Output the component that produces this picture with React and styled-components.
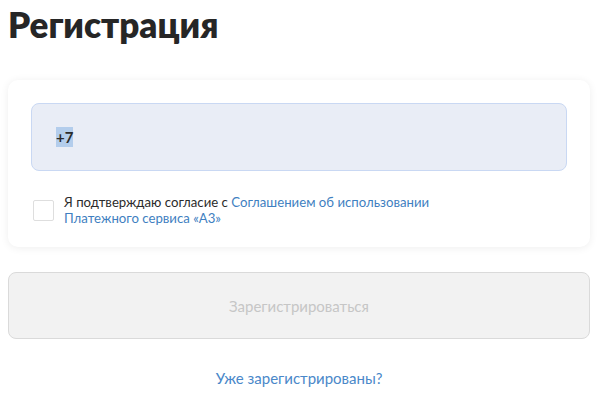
import React from 'react'
import styled, { createGlobalStyle } from 'styled-components'

const GlobalStyle = createGlobalStyle`
  html, body {
    margin: 0;
    padding: 0;
    background: #ffffff;
  }
  body {
    font-family: "Lato", "Noto Sans", sans-serif;
    color: #2b2b2b;
  }
`

const Page = styled.main`
  width: 582px;
  padding: 3px 0 0 8px;
  display: flex;
  flex-direction: column;
`

const Title = styled.h1`
  margin: 0;
  font-size: 35px;
  line-height: 43px;
  font-weight: 800;
  color: #262626;
`

const Card = styled.section`
  margin-top: 34px;
  padding: 23px 23px 21px;
  background: #fff;
  border-radius: 10px;
  box-shadow: 0 1px 8px rgba(0, 0, 0, 0.07);
  display: flex;
  flex-direction: column;
`

const PhoneField = styled.div`
  height: 68px;
  box-sizing: border-box;
  padding: 0 24px;
  display: flex;
  align-items: center;
  background: #e9edf6;
  border: 1px solid #c9d8f3;
  border-radius: 8px;
  font-size: 15px;
  font-weight: 700;
  color: #2b2b2b;
`

const Selected = styled.span`
  background: #b3cdec;
  padding: 1px 0;
`

const Consent = styled.label`
  margin-top: 23px;
  display: flex;
  align-items: center;
  gap: 10px;
  padding-left: 2px;
`

const Box = styled.span`
  width: 21px;
  height: 21px;
  box-sizing: border-box;
  border: 1px solid #dedede;
  border-radius: 2px;
  background: #fff;
  flex-shrink: 0;
`

const ConsentText = styled.span`
  max-width: 372px;
  font-size: 13.2px;
  line-height: 16px;
  color: #2b2b2b;
`

const InlineLink = styled.a`
  color: #3f7fc1;
  text-decoration: none;
`

const SubmitButton = styled.button`
  margin-top: 25px;
  height: 67px;
  border: 1px solid #dadada;
  border-radius: 8px;
  background: #f2f2f2;
  font-family: inherit;
  font-size: 15px;
  color: #c6c6c6;
`

const LoginLink = styled.a`
  margin-top: 30px;
  align-self: center;
  font-size: 15px;
  line-height: 18px;
  color: #4a88c9;
  text-decoration: none;
`

export default function App() {
  return (
    <>
      <GlobalStyle />
      <Page>
        <Title>Регистрация</Title>
        <Card>
          <PhoneField>
            <Selected>+7</Selected>
          </PhoneField>
          <Consent>
            <Box />
            <ConsentText>
              Я подтверждаю согласие с{' '}
              <InlineLink href="#">Соглашением об использовании Платежного сервиса «А3»</InlineLink>
            </ConsentText>
          </Consent>
        </Card>
        <SubmitButton disabled>Зарегистрироваться</SubmitButton>
        <LoginLink href="#">Уже зарегистрированы?</LoginLink>
      </Page>
    </>
  )
}
